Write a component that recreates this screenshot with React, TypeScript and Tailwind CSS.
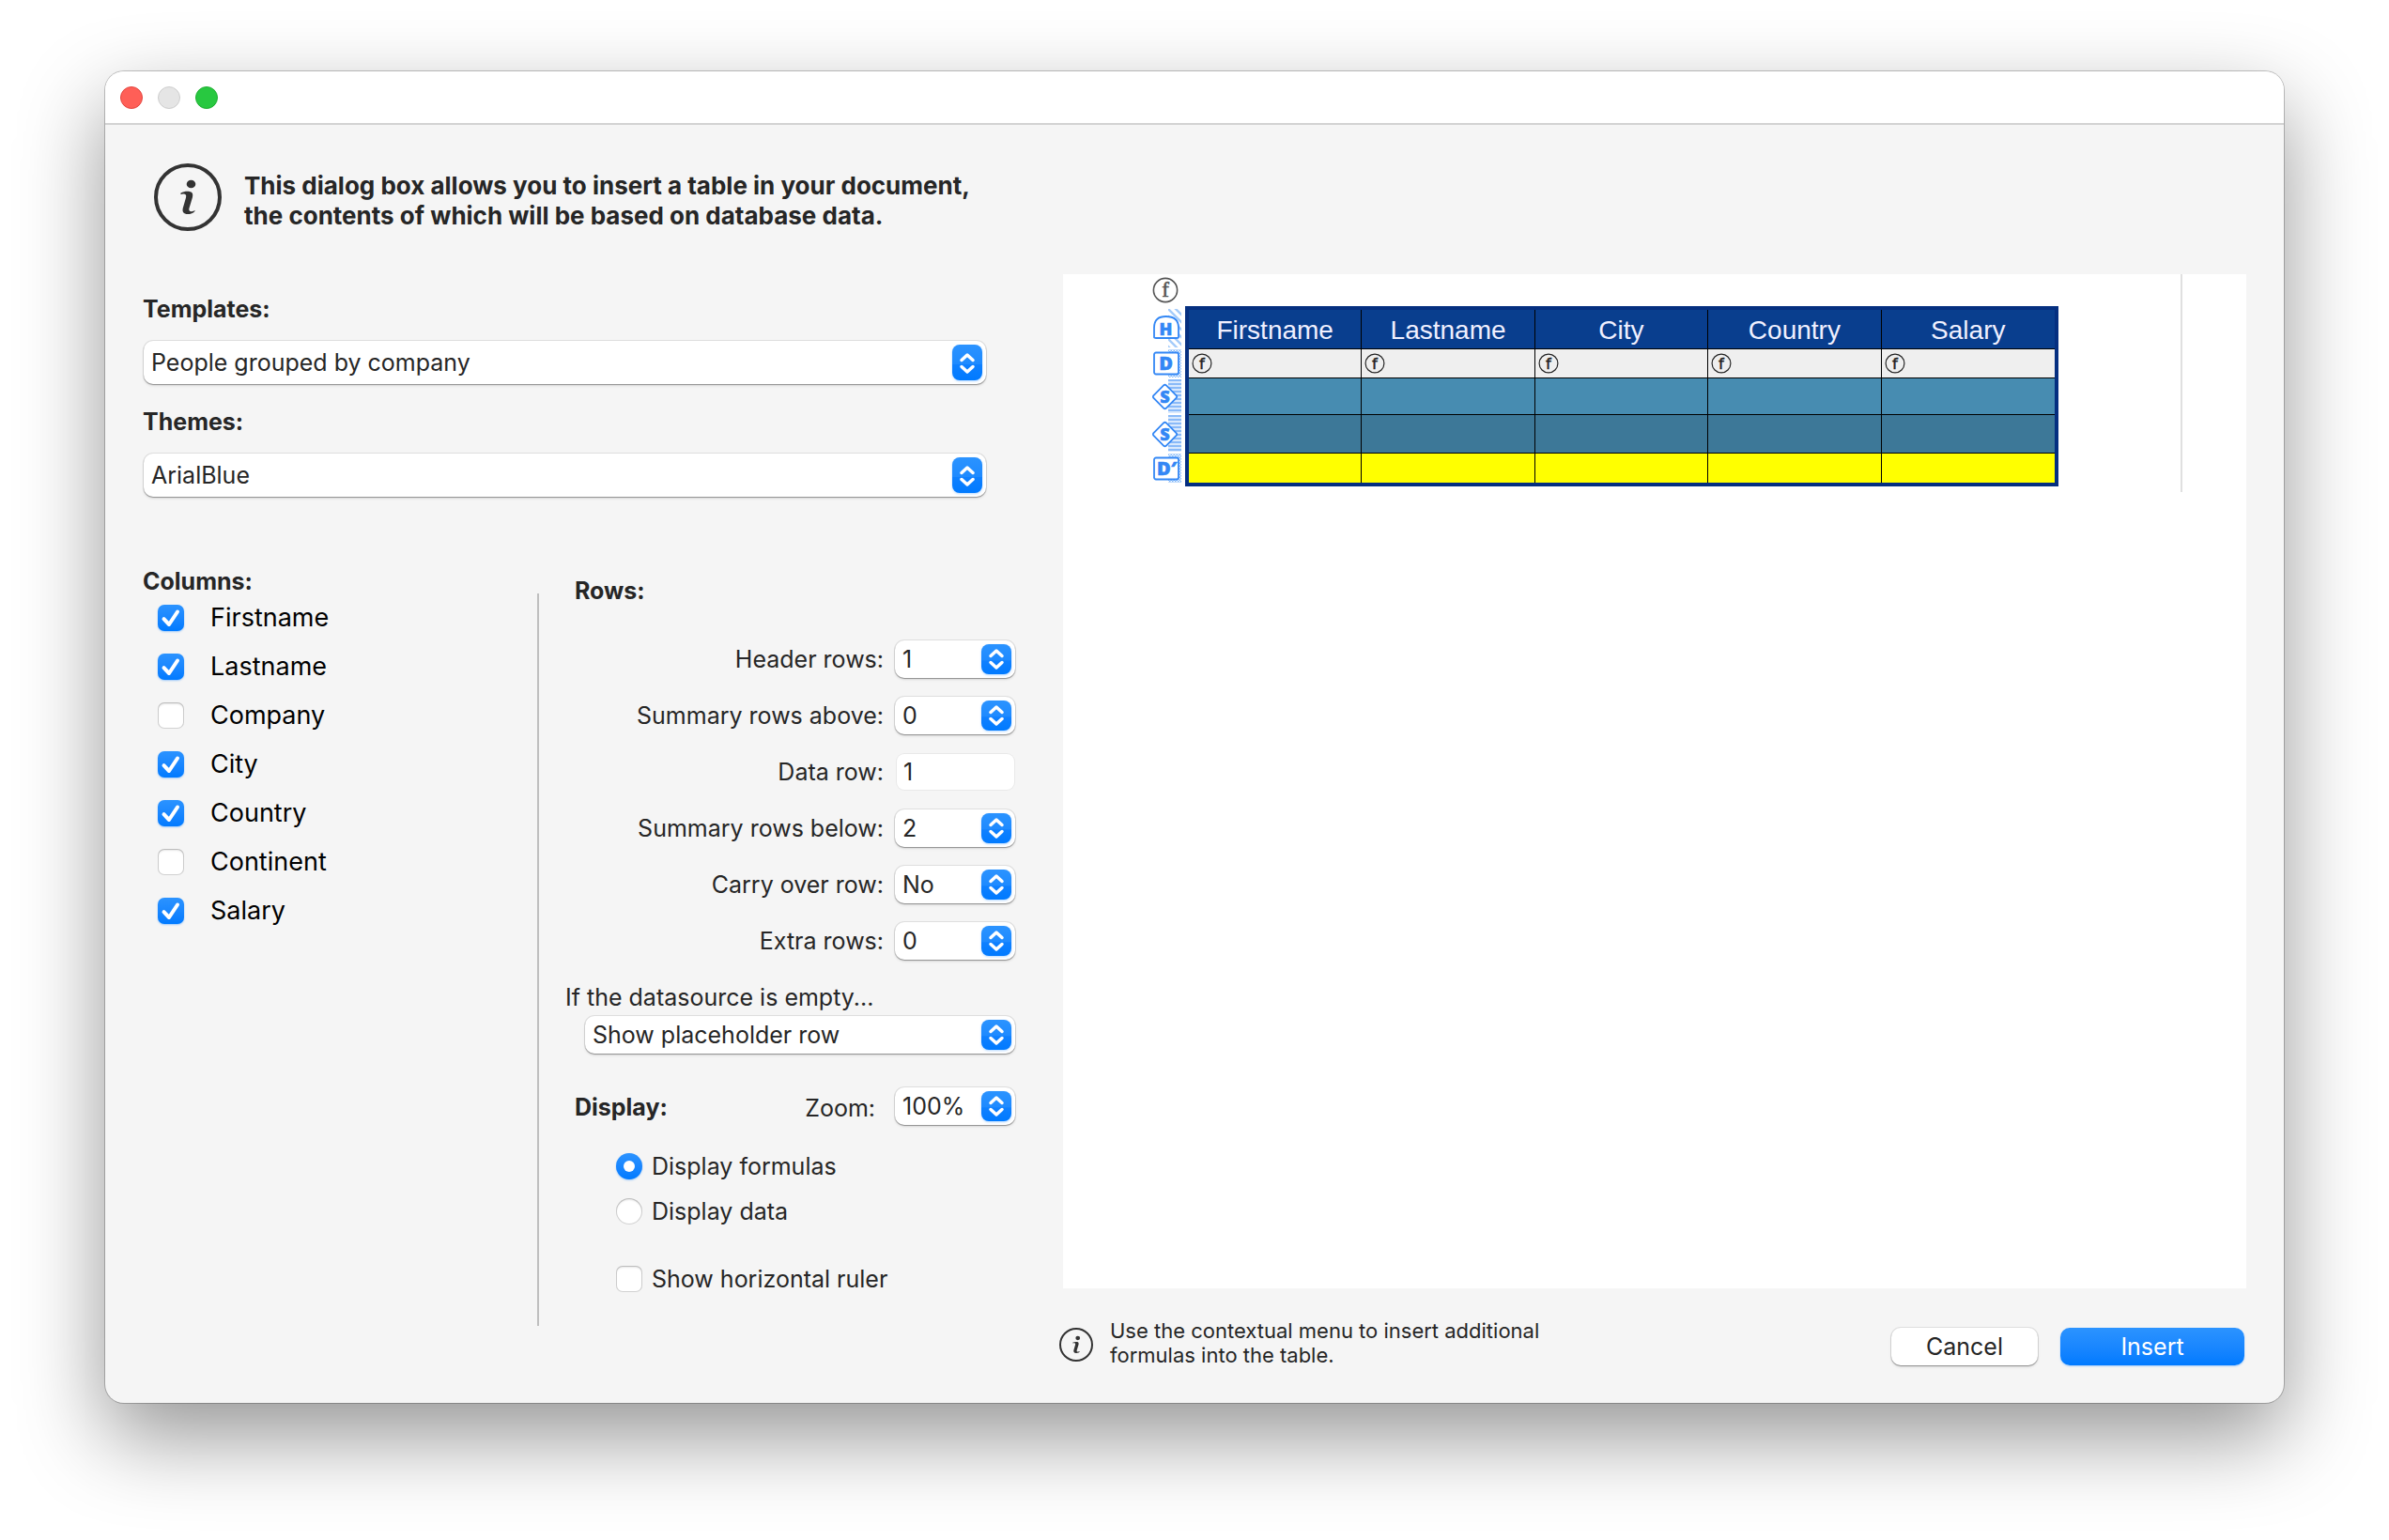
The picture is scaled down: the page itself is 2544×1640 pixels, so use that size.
import { useId, useState } from "react";
import type { ReactNode } from "react";

const COLUMNS = [
  { name: "Firstname", on: true },
  { name: "Lastname", on: true },
  { name: "Company", on: false },
  { name: "City", on: true },
  { name: "Country", on: true },
  { name: "Continent", on: false },
  { name: "Salary", on: true },
];

const HEADERS = ["Firstname", "Lastname", "City", "Country", "Salary"];

function InfoIcon({ className }: { className: string }) {
  return (
    <svg viewBox="0 0 72 72" className={className} fill="none" aria-hidden="true">
      <circle cx="36" cy="36" r="34" stroke="#333333" strokeWidth="4" />
      <ellipse cx="39.5" cy="22" rx="4.8" ry="4.3" fill="#333333" />
      <path
        d="M28.5 31.5C32 29.6 36 29.4 38.6 30.2C41.4 31 41.6 33.2 41 36L37.4 48C36.8 50.2 38 51.4 40 51.2C41.4 51 42.6 50.6 43.8 50C43.4 52.4 39.4 54.2 36 54C31.4 53.8 29.8 51.4 30.8 47.4L34 36.4C34.8 33.4 33.4 32.4 31 32.6C30 32.6 29.2 32.8 28.4 33Z"
        fill="#333333"
      />
    </svg>
  );
}

function Stepper({ tall }: { tall?: boolean }) {
  const id = useId();
  const h = tall ? 38 : 32;
  const c = tall ? 20 : 16;
  return (
    <svg
      width="32"
      height={h}
      viewBox={`0 0 32 ${h}`}
      fill="none"
      aria-hidden="true"
      className="pointer-events-none absolute top-1 right-1 drop-shadow-[0_1px_1px_rgba(0,122,255,0.3)]"
    >
      <defs>
        <linearGradient id={id} x1="0" y1="0" x2="0" y2="1">
          <stop offset="0" stopColor="#2b93ff" />
          <stop offset="0.54" stopColor="#1e8aff" />
          <stop offset="0.55" stopColor="#0f80ff" />
          <stop offset="1" stopColor="#007aff" />
        </linearGradient>
      </defs>
      <rect width="32" height={h} rx="8" fill={`url(#${id})`} />
      <path
        d={`M10 ${c - 3.5}L16 ${c - 9}L22 ${c - 3.5}M10 ${c + 3.5}L16 ${c + 9}L22 ${c + 3.5}`}
        stroke="#fff"
        strokeWidth="3.5"
        strokeLinecap="round"
        strokeLinejoin="round"
      />
    </svg>
  );
}

function Select({ id, options, tall }: { id: string; options: string[]; tall?: boolean }) {
  return (
    <div className="relative w-full">
      <select
        id={id}
        className={`block w-full appearance-none rounded-[10px] bg-white pr-10 pl-2 text-[25px] text-[#262626] shadow-[0_0_0_1px_rgba(0,0,0,0.09),0_1px_1px_rgba(0,0,0,0.28),0_2px_3px_rgba(0,0,0,0.1)] outline-none ${
          tall ? "h-[46px] leading-[44px]" : "h-10 leading-10"
        }`}
      >
        {options.map((o) => (
          <option key={o}>{o}</option>
        ))}
      </select>
      <Stepper tall={tall} />
    </div>
  );
}

function Check({
  label,
  defaultChecked,
  className,
  textClass,
}: {
  label: string;
  defaultChecked?: boolean;
  className: string;
  textClass: string;
}) {
  const [on, setOn] = useState(!!defaultChecked);
  return (
    <label className={`flex items-center ${className}`}>
      <span className="relative block size-7">
        <input
          type="checkbox"
          checked={on}
          onChange={(e) => setOn(e.target.checked)}
          className="block size-7 appearance-none rounded-[7px] bg-white shadow-[inset_0_0_0_1px_rgba(0,0,0,0.18),inset_0_2px_2px_rgba(0,0,0,0.1)] checked:bg-linear-to-b checked:from-[#2b93ff] checked:to-[#007aff] checked:shadow-[0_1px_2px_rgba(0,122,255,0.35)]"
        />
        {on && (
          <svg viewBox="0 0 28 28" className="pointer-events-none absolute inset-0 size-7" fill="none" aria-hidden="true">
            <path d="M6.5 15.2L12 21L21 7.5" stroke="#fff" strokeWidth="4" strokeLinecap="round" strokeLinejoin="round" />
          </svg>
        )}
      </span>
      <span className={textClass}>{label}</span>
    </label>
  );
}

function Radio({ label, defaultChecked }: { label: string; defaultChecked?: boolean }) {
  return (
    <label className="flex h-12 items-center gap-2.5">
      <span className="relative block size-7">
        <input
          type="radio"
          name="display"
          defaultChecked={defaultChecked}
          className="peer block size-7 appearance-none rounded-full bg-white shadow-[inset_0_0_0_1px_rgba(0,0,0,0.18),inset_0_2px_2px_rgba(0,0,0,0.1)] checked:bg-linear-to-b checked:from-[#2b93ff] checked:to-[#007aff] checked:shadow-[0_1px_2px_rgba(0,122,255,0.35)]"
        />
        <span className="pointer-events-none absolute inset-2 hidden rounded-full bg-white peer-checked:block" />
      </span>
      <span>{label}</span>
    </label>
  );
}

function RowField({ id, label, children }: { id: string; label: string; children: ReactNode }) {
  return (
    <div className="flex h-[60px] items-center justify-end gap-3">
      <label htmlFor={id}>{label}</label>
      <div className="w-32">{children}</div>
    </div>
  );
}

function Marker({ kind, height }: { kind: "H" | "D" | "S" | "D′"; height: number }) {
  const id = useId();
  const m = Math.round(height / 2);
  return (
    <svg width="31" height={height} viewBox={`0 0 31 ${height}`} fill="none" aria-hidden="true" className="block">
      <defs>
        {kind === "H" && (
          <pattern id={id} width="8" height="8" patternUnits="userSpaceOnUse">
            <path d="M-2 -2L10 10M-2 6L2 10M6 -2L10 2" stroke="#a5ccfa" strokeWidth="2.4" />
          </pattern>
        )}
        {kind === "S" && (
          <pattern id={id} width="8" height="4" patternUnits="userSpaceOnUse">
            <rect width="8" height="4" fill="#d9e9fd" />
            <path d="M0 2H8" stroke="#6fabf7" strokeWidth="1.5" />
          </pattern>
        )}
        {(kind === "D" || kind === "D′") && (
          <pattern id={id} width="3" height="3" patternUnits="userSpaceOnUse">
            <path d="M0 0H1.5V1.5H0ZM1.5 1.5H3V3H1.5Z" fill="#7db6fa" />
          </pattern>
        )}
      </defs>
      <rect x="17" y="1" width="14" height={height - 2} fill={`url(#${id})`} />
      {kind === "H" && (
        <path
          d={`M2 ${m + 9}V${m - 1}C2 ${m - 10} 7 ${m - 13} 14.5 ${m - 13}S28 ${m - 10} 28 ${m - 1}V${m + 9}Q28 ${m + 10} 26 ${m + 10}H4Q2 ${m + 10} 2 ${m + 9}Z`}
          fill="#fff"
          stroke="#3387f5"
          strokeWidth="1.8"
        />
      )}
      {(kind === "D" || kind === "D′") && (
        <rect x="2" y={m - 11.5} width="26" height="23" rx="2" fill="#fff" stroke="#3387f5" strokeWidth="1.8" />
      )}
      {kind === "S" && (
        <rect
          x="4"
          y={m - 9}
          width="19"
          height="19"
          rx="2"
          transform={`rotate(45 13.5 ${m + 0.5})`}
          fill="#fff"
          stroke="#3387f5"
          strokeWidth="1.8"
        />
      )}
      <text
        x={kind === "S" ? 13.5 : kind === "D′" ? 15.5 : 14.5}
        y={m + 7}
        textAnchor="middle"
        className={
          kind === "S" || kind === "H"
            ? "font-['Open_Sans'] text-[18px] font-extrabold"
            : "font-['Open_Sans'] text-[20px] font-extrabold"
        }
        fill="#3387f5"
        stroke="#3387f5"
        strokeWidth="0.6"
      >
        {kind}
      </text>
    </svg>
  );
}

function FormulaIcon({ className, serif }: { className: string; serif?: boolean }) {
  return (
    <svg viewBox="0 0 28 28" className={className} fill="none" aria-hidden="true">
      <circle cx="14" cy="14" r="12.6" stroke={serif ? "#555555" : "#222222"} strokeWidth={serif ? 1.6 : 1.5} />
      <text
        x="14"
        y="21"
        textAnchor="middle"
        className={serif ? "font-['Liberation_Serif'] text-[23px]" : "font-['DejaVu_Sans'] text-[21px]"}
        fill={serif ? "#555555" : "#222222"}
        stroke={serif ? "#555555" : "#222222"}
        strokeWidth="0.6"
      >
        f
      </text>
    </svg>
  );
}

const cell = "border-r border-b border-black last:border-r-0";

export default function App() {
  return (
    <div className="min-h-screen bg-white px-28 pt-[76px] pb-[148px] font-['Inter',sans-serif] text-[25px] leading-8 text-[#262626]">
      <main className="overflow-hidden rounded-[20px] bg-[#f5f5f5] shadow-[0_0_0_1px_rgba(0,0,0,0.22),0_36px_90px_rgba(0,0,0,0.42)]">
        <header className="flex h-[57px] items-start gap-4 border-b-2 border-[#d2d2d2] bg-white px-4 pt-4">
          <button aria-label="Close" className="size-6 rounded-full border border-[#e2463f] bg-[#ff5f57]" />
          <button aria-label="Minimize" disabled className="size-6 rounded-full border border-[#cdcdcd] bg-[#e5e5e5]" />
          <button aria-label="Zoom window" className="size-6 rounded-full border border-[#1fae31] bg-[#28c840]" />
        </header>

        <form className="pr-10 pb-[38px] pl-10" onSubmit={(e) => e.preventDefault()}>
          <div className="flex h-[159px] items-start gap-6 pt-[41px] pl-3">
            <InfoIcon className="size-[72px]" />
            <p className="pt-2 text-[26px] font-bold">
              This dialog box allows you to insert a table in your document,
              <br />
              the contents of which will be based on database data.
            </p>
          </div>

          <div className="flex gap-[47px]">
            <section className="w-[929px] shrink-0">
              <div className="w-[898px] pt-[21px]">
                <label htmlFor="tpl" className="block font-bold">
                  Templates:
                </label>
                <div className="mt-[18px] pl-px">
                  <Select id="tpl" tall options={["People grouped by company"]} />
                </div>
                <label htmlFor="theme" className="mt-6 block font-bold">
                  Themes:
                </label>
                <div className="mt-[18px] pl-px">
                  <Select id="theme" tall options={["ArialBlue"]} />
                </div>
              </div>

              <div className="mt-[77px] flex">
                <fieldset className="w-[420px]">
                  <legend className="leading-[26px] font-bold">Columns:</legend>
                  {COLUMNS.map((c) => (
                    <Check
                      key={c.name}
                      label={c.name}
                      defaultChecked={c.on}
                      className="ml-4 h-[52px] gap-7"
                      textClass="text-[27px] text-black"
                    />
                  ))}
                </fieldset>
                <div className="mt-[26px] w-0.5 bg-[#bfbfbf]" />
                <div className="flex-1 pt-[7px] pb-[26px]">
                  <h2 className="ml-[38px] font-bold">Rows:</h2>
                  <div className="mt-[27px]">
                    <RowField id="hdr" label="Header rows:">
                      <Select id="hdr" options={["1", "0", "2"]} />
                    </RowField>
                    <RowField id="above" label="Summary rows above:">
                      <Select id="above" options={["0", "1", "2"]} />
                    </RowField>
                    <RowField id="data" label="Data row:">
                      <input
                        id="data"
                        type="text"
                        defaultValue="1"
                        className="ml-0.5 block h-[38px] w-[125px] rounded-[8px] bg-white pl-[7px] text-[25px] leading-[38px] shadow-[0_0_0_1px_#e9e9e9] outline-none"
                      />
                    </RowField>
                    <RowField id="below" label="Summary rows below:">
                      <Select id="below" options={["2", "0", "1"]} />
                    </RowField>
                    <RowField id="carry" label="Carry over row:">
                      <Select id="carry" options={["No", "Yes"]} />
                    </RowField>
                    <RowField id="extra" label="Extra rows:">
                      <Select id="extra" options={["0", "1", "2"]} />
                    </RowField>
                  </div>
                  <label htmlFor="empty" className="mt-[14px] ml-7 block">
                    If the datasource is empty...
                  </label>
                  <div className="mt-1 ml-[49px]">
                    <Select id="empty" options={["Show placeholder row", "Hide table"]} />
                  </div>
                  <div className="mt-9 ml-[38px] flex items-center">
                    <h2 className="pt-0.5 font-bold">Display:</h2>
                    <label htmlFor="zoom" className="ml-auto pt-1 pr-[21px]">
                      Zoom:
                    </label>
                    <div className="w-32">
                      <Select id="zoom" options={["100%", "50%", "200%"]} />
                    </div>
                  </div>
                  <div className="mt-5 ml-[82px]">
                    <Radio label="Display formulas" defaultChecked />
                    <Radio label="Display data" />
                    <Check label="Show horizontal ruler" className="mt-6 h-12 gap-2.5" textClass="" />
                  </div>
                </div>
              </div>
            </section>

            <section className="flex min-w-0 flex-1 flex-col">
              <div className="ml-1 min-h-[1080px] bg-white">
                <div className="mr-[68px] border-r-2 border-[#e0e0e0] pt-[3px] pb-1.5 pl-[95px]">
                  <FormulaIcon serif className="mb-[3px] block size-7" />
                  <div className="flex gap-1">
                    <div className="shrink-0 pt-0.5">
                      <Marker kind="H" height={43} />
                      <Marker kind="D" height={32} />
                      <Marker kind="S" height={38} />
                      <Marker kind="S" height={41} />
                      <Marker kind="D′" height={33} />
                    </div>
                    <div className="w-full max-w-[930px] border-4 border-[#052f80]">
                      <table className="w-full table-fixed border-separate border-spacing-0">
                        <thead>
                          <tr className="h-[42px] bg-[#093e8e]">
                            {HEADERS.map((h) => (
                              <th
                                key={h}
                                className={`${cell} pt-0.5 font-['Liberation_Sans',sans-serif] text-[28px] leading-8 font-normal text-[#f0f0ff]`}
                              >
                                {h}
                              </th>
                            ))}
                          </tr>
                        </thead>
                        <tbody>
                          <tr className="h-[31px] bg-[#efefef]">
                            {HEADERS.map((h) => (
                              <td key={h} className={`${cell} pl-[3px]`}>
                                <FormulaIcon className="block size-[22px]" />
                              </td>
                            ))}
                          </tr>
                          <tr className="h-[39px] bg-[#478cb1]">
                            {HEADERS.map((h) => (
                              <td key={h} className={cell} />
                            ))}
                          </tr>
                          <tr className="h-[41px] bg-[#3d7898]">
                            {HEADERS.map((h) => (
                              <td key={h} className={cell} />
                            ))}
                          </tr>
                          <tr className="h-[31px] bg-[#ffff00]">
                            {HEADERS.map((h) => (
                              <td key={h} className="border-r border-black last:border-r-0" />
                            ))}
                          </tr>
                        </tbody>
                      </table>
                    </div>
                  </div>
                </div>
              </div>

              <footer className="mt-8 flex items-start pr-0.5">
                <InfoIcon className="mt-2.5 size-9" />
                <p className="ml-[18px] text-[22px] leading-[26px]">
                  Use the contextual menu to insert additional
                  <br />
                  formulas into the table.
                </p>
                <div className="mt-2.5 ml-auto flex gap-6">
                  <button
                    type="button"
                    className="h-10 w-[156px] rounded-[10px] bg-white text-[25px] leading-[38px] shadow-[0_0_0_1px_rgba(0,0,0,0.09),0_1px_1px_rgba(0,0,0,0.28),0_2px_3px_rgba(0,0,0,0.1)]"
                  >
                    Cancel
                  </button>
                  <button
                    type="submit"
                    className="h-10 w-[196px] rounded-[10px] bg-linear-to-b from-[#2b93ff] to-[#007aff] text-[25px] leading-[38px] text-white shadow-[0_1px_2px_rgba(0,122,255,0.35)]"
                  >
                    Insert
                  </button>
                </div>
              </footer>
            </section>
          </div>
        </form>
      </main>
    </div>
  );
}
